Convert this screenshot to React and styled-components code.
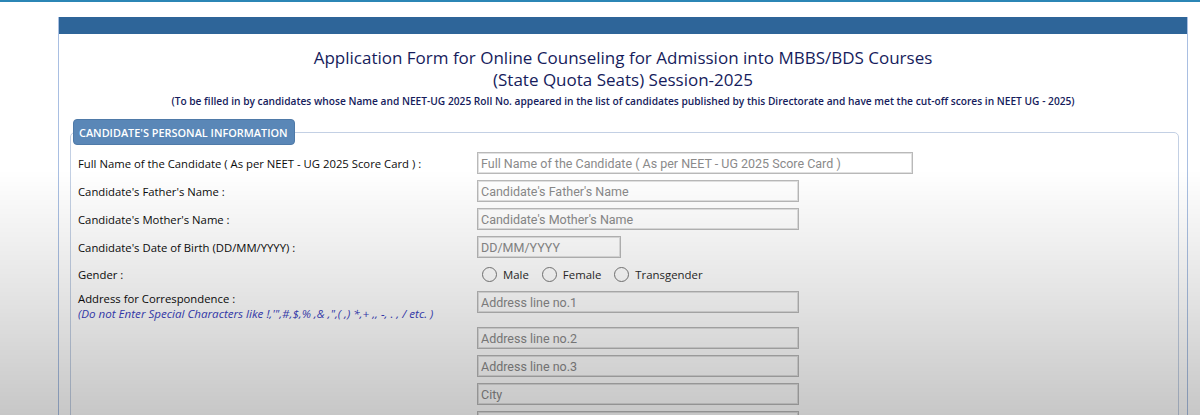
import styled, { createGlobalStyle } from 'styled-components';

const GlobalStyle = createGlobalStyle`
  html, body {
    margin: 0;
    padding: 0;
    overflow: hidden;
    background: #ffffff;
    font-family: 'Open Sans', 'Liberation Sans', sans-serif;
  }
`;

const Page = styled.div`
  border-top: 2px solid #2b86b5;
  padding: 15px 12px 0 58px;
  height: 415px;
  box-sizing: border-box;
`;

// video-style fade laid over the whole page
const Shade = styled.div`
  position: fixed;
  inset: 0;
  pointer-events: none;
  background: linear-gradient(
    to bottom,
    rgba(0, 0, 0, 0) 0,
    rgba(0, 0, 0, 0) 170px,
    rgba(0, 0, 0, 0.1) 290px,
    rgba(0, 0, 0, 0.22) 415px
  );
`;

const Panel = styled.div`
  border: 1px solid #a9bfe2;
  border-top: none;
  min-height: 600px;
`;

const PanelBar = styled.div`
  height: 17px;
  background: #2e6599;
`;

const Heading = styled.div`
  text-align: center;
  color: #161c5c;
  padding-top: 13px;
`;

const Title = styled.h1`
  margin: 0;
  font-size: 17px;
  line-height: 22px;
  font-weight: 400;
`;

const Subtitle = styled.p`
  margin: 3px 0 0;
  font-size: 10.2px;
  line-height: 14px;
  font-weight: 600;
`;

const Fieldset = styled.fieldset`
  margin: 11px 8px 0 11px;
  padding: 6px 8px 20px 7px;
  border: 1px solid #c3d0e4;
  border-radius: 5px;
`;

const Legend = styled.legend`
  margin-left: -5px;
  padding: 6px 6px 5px 5px;
  background: #5a87b7;
  border: 1px solid #4f7aa8;
  border-radius: 4px;
  color: #ffffff;
  font-size: 10.9px;
  line-height: 13px;
  font-weight: 600;
  text-transform: uppercase;
`;

const Rows = styled.div`
  display: flex;
  flex-direction: column;
  gap: 6px;
  padding-top: 1px;
`;

const Row = styled.div`
  display: grid;
  grid-template-columns: 399px 1fr;
  align-items: ${({ $top }) => ($top ? 'start' : 'center')};
`;

const Label = styled.div`
  color: #0c0c0c;
  font-size: 11.3px;
  line-height: 15px;
`;

const Note = styled.div`
  color: #3a3fc0;
  font-style: italic;
  font-size: 11.6px;
  line-height: 15px;
`;

const Input = styled.input`
  display: block;
  box-sizing: border-box;
  width: ${({ $w }) => $w}px;
  height: 22px;
  padding: 0 3px;
  border: 1px solid #b9b9b9;
  box-shadow: inset 0 0 0 1px #e1e1e1;
  background: #ffffff;
  font-family: Roboto, 'Liberation Sans', sans-serif;
  font-size: 12.5px;
  color: #333;

  &::placeholder {
    color: #8a8a8a;
  }
`;

const RadioGroup = styled.div`
  display: flex;
  align-items: center;
  height: 21px;
  padding-left: 5px;
`;

const RadioOption = styled.label`
  display: flex;
  align-items: center;
  margin-right: 13px;
  font-size: 11.4px;
  color: #2a2a2a;
`;

const Radio = styled.input`
  appearance: none;
  margin: 0 6px 0 0;
  width: 15px;
  height: 15px;
  border: 1px solid #7a7a7a;
  border-radius: 50%;
  background: #ffffff;
`;

const fields = [
  { label: 'Full Name of the Candidate ( As per NEET - UG 2025 Score Card ) :', ph: 'Full Name of the Candidate ( As per NEET - UG 2025 Score Card )', w: 436 },
  { label: "Candidate's Father's Name :", ph: "Candidate's Father's Name", w: 322 },
  { label: "Candidate's Mother's Name :", ph: "Candidate's Mother's Name", w: 322 },
  { label: "Candidate's Date of Birth (DD/MM/YYYY) :", ph: 'DD/MM/YYYY', w: 144 },
];

const addressLines = ['Address line no.2', 'Address line no.3', 'City', 'District', 'State', 'PIN Code'];

export default function App() {
  return (
    <>
      <GlobalStyle />
      <Page>
        <Panel>
          <PanelBar />
          <Heading>
            <Title>
              Application Form for Online Counseling for Admission into MBBS/BDS Courses
              <br />
              (State Quota Seats) Session-2025
            </Title>
            <Subtitle>
              (To be filled in by candidates whose Name and NEET-UG 2025 Roll No. appeared in the list of
              candidates published by this Directorate and have met the cut-off scores in NEET UG - 2025)
            </Subtitle>
          </Heading>

          <Fieldset>
            <Legend>Candidate's Personal Information</Legend>
            <Rows>
              {fields.map((f) => (
                <Row key={f.ph}>
                  <Label>{f.label}</Label>
                  <Input $w={f.w} placeholder={f.ph} />
                </Row>
              ))}

              <Row>
                <Label>Gender :</Label>
                <RadioGroup>
                  {['Male', 'Female', 'Transgender'].map((g) => (
                    <RadioOption key={g}>
                      <Radio type="radio" name="gender" />
                      {g}
                    </RadioOption>
                  ))}
                </RadioGroup>
              </Row>

              <Row $top>
                <div>
                  <Label>Address for Correspondence :</Label>
                  <Note>(Do not Enter Special Characters like !,'",#,$,% ,&amp; ,",( ,) *,+ ,, -, . , / etc. )</Note>
                </div>
                <Input $w={322} placeholder="Address line no.1" />
              </Row>

              {addressLines.map((a) => (
                <Row key={a}>
                  <span />
                  <Input $w={322} placeholder={a} />
                </Row>
              ))}
            </Rows>
          </Fieldset>
        </Panel>
      </Page>
      <Shade />
    </>
  );
}
